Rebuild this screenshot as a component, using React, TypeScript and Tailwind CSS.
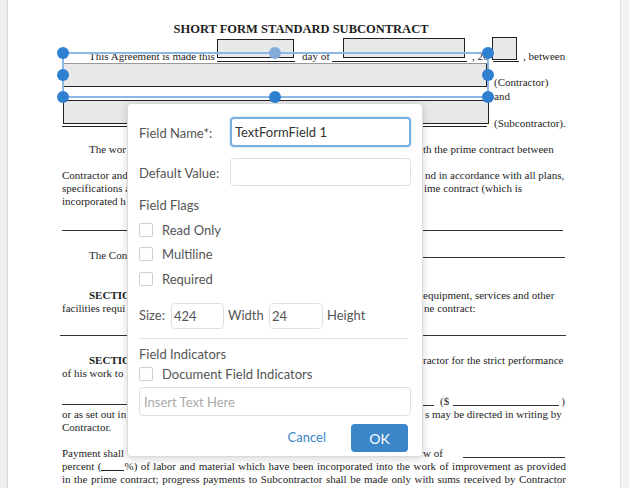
import React from "react";

const L = "h-[13px] leading-[13px] whitespace-nowrap";
const G = "grid grid-cols-[65px_296px_1fr] h-[13px] leading-[13px] whitespace-nowrap";

function Justified({ tokens, className = "" }: { tokens: React.ReactNode[]; className?: string }) {
  return (
    <div className={`flex justify-between ${L} ${className}`}>
      {tokens.map((t, i) => (
        <span key={i} className="flex items-start">
          {t}
        </span>
      ))}
    </div>
  );
}

function Check({ label }: { label: string }) {
  return (
    <div className="flex h-[14px] items-center">
      <span className="h-[14px] w-[14px] rounded-[2px] border border-[#cfcfcf] bg-white" />
      <span className="ml-[9px] leading-[14px]">{label}</span>
    </div>
  );
}

export default function App() {
  const line22 =
    "in the prime contract; progress payments to Subcontractor shall be made only with sums received by Contractor".split(" ");
  const line21rest =
    "of labor and material which have been incorporated into the work of improvement as provided".split(" ");
  const tokens21: React.ReactNode[] = [
    "percent",
    <>
      (<span className="inline-block h-[11px] w-[23px] border-b border-[#222]" />
      %)
    </>,
    ...line21rest,
  ];

  return (
    <div className="flex h-[488px] w-[629px] overflow-hidden bg-white">
      <div className="w-[8px] shrink-0 border-r border-[#d8d8d8] bg-[#eeeeee]" />

      <div className="relative w-[612px] shrink-0 bg-white px-[54px] pt-[21px] font-['Liberation_Serif',serif] text-[11px] text-[#1e1e1e]">
        {/* title */}
        <div className="h-[16px] w-[478px] text-center text-[12.5px] font-bold leading-[16px]">
          SHORT FORM STANDARD SUBCONTRACT
        </div>

        {/* line 1 */}
        <div className={`mt-[13px] flex ${L}`}>
          <span className="w-[155px] shrink-0 pl-[27px]">This Agreement is made this</span>
          <span className="h-[12px] w-[78px] shrink-0 border-b border-[#222]" />
          <span className="w-[37px] shrink-0 pl-[7px]">day of</span>
          <span className="h-[12px] w-[135px] shrink-0 border-b border-[#222]" />
          <span className="w-[26px] shrink-0 pl-[5px]">, 20</span>
          <span className="h-[12px] w-[26px] shrink-0 border-b border-[#222]" />
          <span className="pl-[4px]">, between</span>
        </div>

        <div className={`mt-[13px] flex ${L}`}>
          <span className="w-[432px] shrink-0" />
          <span>(Contractor)</span>
        </div>
        <div className={`mt-[1px] flex ${L}`}>
          <span className="w-[432px] shrink-0" />
          <span>and</span>
        </div>
        <div className={`mt-[14px] flex ${L}`}>
          <span className="h-[10px] w-[425px] shrink-0 border-b border-[#222]" />
          <span className="ml-[7px]">(Subcontractor).</span>
        </div>

        <div className={`mt-[13px] ${G}`}>
          <span className="pl-[27px]">The wor</span>
          <span />
          <span>th the prime contract between</span>
        </div>
        <div className={`mt-[13px] ${G}`}>
          <span>Contractor and</span>
          <span />
          <span className="pl-[2px]">nd in accordance with all plans,</span>
        </div>
        <div className={G}>
          <span>specifications a</span>
          <span />
          <span className="pl-[1px]">ime contract (which is</span>
        </div>
        <div className={G}>
          <span>incorporated h</span>
          <span />
          <span />
        </div>

        <div className="mt-[22px] h-px w-[501px] bg-[#333]" />

        <div className={`mt-[18px] ${G}`}>
          <span className="pl-[27px]">The Con</span>
          <span />
          <span className="h-[9px] w-[142px] border-b border-[#333]" />
        </div>

        <div className={`mt-[27px] ${G}`}>
          <span className="pl-[27px] font-bold">SECTIO</span>
          <span />
          <span>equipment, services and other</span>
        </div>
        <div className={G}>
          <span>facilities requi</span>
          <span />
          <span className="pl-[1px]">ne contract:</span>
        </div>

        <div className="-ml-[2px] mt-[20px] h-px w-[506px] bg-[#333]" />

        <div className={`mt-[18px] ${G}`}>
          <span className="pl-[27px] font-bold">SECTIO</span>
          <span />
          <span>ractor for the strict performance</span>
        </div>
        <div className={G}>
          <span>of his work to</span>
          <span />
          <span />
        </div>

        <div className={`mt-[15px] ${G}`}>
          <span className="h-[10px] border-b border-[#333]" />
          <span />
          <span className="flex items-start">
            <span className="h-[11px] w-[11px] border-b border-[#333]" />
            <span className="ml-[6px]">($</span>
            <span className="ml-[4px] h-[11px] w-[106px] border-b border-[#333]" />
            <span className="ml-[2px]">)</span>
          </span>
        </div>
        <div className={G}>
          <span>or as set out in</span>
          <span />
          <span className="pl-[2px]">s may be directed in writing by</span>
        </div>
        <div className={G}>
          <span>Contractor.</span>
          <span />
          <span />
        </div>

        <div className={`mt-[13px] ${G}`}>
          <span>Payment shall</span>
          <span />
          <span className="flex items-start">
            <span>w of</span>
            <span className="ml-[20px] h-[11px] w-[102px] border-b border-[#333]" />
          </span>
        </div>
        <Justified tokens={tokens21} />
        <Justified tokens={line22} />

        {/* form field widgets */}
        <div className="absolute left-[209px] top-[39px] h-[19px] w-[77px] border border-[#222] bg-[#e8e8e8]" />
        <div className="absolute left-[335px] top-[38px] h-[20px] w-[122px] border border-[#222] bg-[#e8e8e8]" />
        <div className="absolute left-[484px] top-[37px] h-[23px] w-[25px] border border-[#222] bg-[#e8e8e8]" />
        <div className="absolute left-[55px] top-[63px] h-[24px] w-[424px] border border-[#222] border-t-[#9a9a9a] bg-[#e8e8e8]" />
        <div className="absolute left-[55px] top-[100px] h-[24px] w-[426px] border border-[#222] bg-[#e8e8e8]" />

        {/* selection */}
        <div className="absolute left-[54px] top-[52px] h-[46px] w-[427px] border-2 border-[#8db7e4]" />
        <span className="absolute left-[49px] top-[47px] h-[12px] w-[12px] rounded-full bg-[#2f80d1]" />
        <span className="absolute left-[49px] top-[69px] h-[12px] w-[12px] rounded-full bg-[#2f80d1]" />
        <span className="absolute left-[49px] top-[91px] h-[12px] w-[12px] rounded-full bg-[#2f80d1]" />
        <span className="absolute left-[261px] top-[47px] h-[12px] w-[12px] rounded-full bg-[#82abd8]" />
        <span className="absolute left-[261px] top-[91px] h-[12px] w-[12px] rounded-full bg-[#2f80d1]" />
        <span className="absolute left-[474px] top-[47px] h-[12px] w-[12px] rounded-full bg-[#2f80d1]" />
        <span className="absolute left-[474px] top-[69px] h-[12px] w-[12px] rounded-full bg-[#2f80d1]" />
        <span className="absolute left-[474px] top-[91px] h-[12px] w-[12px] rounded-full bg-[#2f80d1]" />

        {/* dialog */}
        <div className="absolute left-[119px] top-[103px] h-[354px] w-[296px] rounded-[4px] border border-[#dadada] bg-white px-[11px] pt-[13px] font-['Lato',sans-serif] text-[13px] text-[#555] shadow-[0_2px_8px_rgba(0,0,0,0.16)]">
          <div className="flex h-[30px] items-center">
            <span className="w-[91px] shrink-0 pt-[3px]">Field Name*:</span>
            <input
              readOnly
              defaultValue="TextFormField 1"
              className="h-[30px] w-[181px] rounded-[4px] border-2 border-[#79b0e0] px-[3px] text-[13px] text-[#333] outline-none shadow-[0_0_2px_rgba(102,160,220,0.6)]"
            />
          </div>
          <div className="mt-[11px] flex h-[28px] items-center">
            <span className="w-[91px] shrink-0 pt-[4px]">Default Value:</span>
            <input
              readOnly
              className="h-[28px] w-[181px] rounded-[4px] border border-[#e0e0e0] px-[4px] text-[13px] outline-none"
            />
          </div>
          <div className="mt-[11px] h-[16px] leading-[16px]">Field Flags</div>
          <div className="mt-[10px]">
            <Check label="Read Only" />
          </div>
          <div className="mt-[10px]">
            <Check label="Multiline" />
          </div>
          <div className="mt-[11px]">
            <Check label="Required" />
          </div>
          <div className="mt-[17px] flex h-[26px] items-center">
            <span className="w-[32px] shrink-0">Size:</span>
            <input
              readOnly
              defaultValue="424"
              className="h-[26px] w-[53px] rounded-[4px] border border-[#e0e0e0] px-[2px] text-[13px] text-[#555] outline-none"
            />
            <span className="ml-[4px] w-[41px] shrink-0">Width</span>
            <input
              readOnly
              defaultValue="24"
              className="h-[26px] w-[54px] rounded-[4px] border border-[#e0e0e0] px-[2px] text-[13px] text-[#555] outline-none"
            />
            <span className="ml-[4px]">Height</span>
          </div>
          <div className="mr-[3px] mt-[9px] h-px bg-[#e2e2e2]" />
          <div className="mt-[7px] h-[16px] leading-[16px]">Field Indicators</div>
          <div className="mt-[5px]">
            <Check label="Document Field Indicators" />
          </div>
          <input
            readOnly
            placeholder="Insert Text Here"
            className="mt-[6px] h-[29px] w-[272px] rounded-[4px] border border-[#e0e0e0] px-[4px] text-[13px] outline-none placeholder:text-[#aaa]"
          />
          <div className="mt-[8px] flex items-center justify-end pr-[3px]">
            <button className="mr-[25px] text-[13px] text-[#3a87c8]">Cancel</button>
            <button className="h-[28px] w-[57px] rounded-[4px] bg-[#3a86c8] text-[14px] text-white">OK</button>
          </div>
        </div>
      </div>

      <div className="flex-1 border-l border-[#e0e2e6] bg-[#f1f2f4]" />
    </div>
  );
}
